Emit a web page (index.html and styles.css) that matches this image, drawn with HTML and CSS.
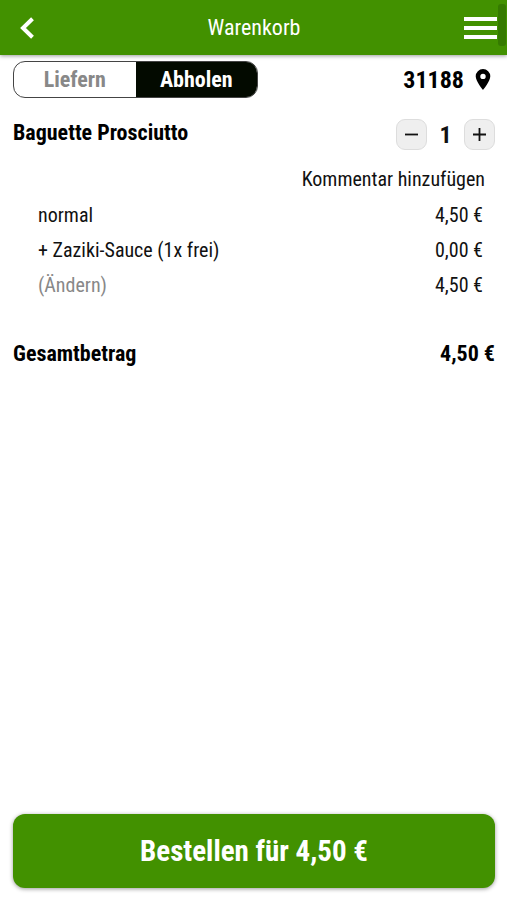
FILE: index.html
```html
<!DOCTYPE html>
<html lang="de">
<head>
<meta charset="utf-8">
<meta name="viewport" content="width=device-width, initial-scale=1">
<title>Warenkorb</title>
<link rel="stylesheet" href="styles.css">
</head>
<body>
<header class="topbar">
  <button class="icon-button" type="button" aria-label="Zurück">
    <svg width="18" height="24" viewBox="0 0 18 24"><path d="M13.500 2.800 4 12l9.500 9.200" fill="none" stroke="currentColor" stroke-width="4"/></svg>
  </button>
  <h1 class="topbar-title">Warenkorb</h1>
  <button class="icon-button" type="button" aria-label="Menü">
    <svg width="34" height="24" viewBox="0 0 34 24"><path d="M1 3h33M1 12h33M1 21h33" stroke="currentColor" stroke-width="4"/></svg>
  </button>
  <span class="scroll-thumb"></span>
</header>
<main class="cart">
  <div class="row delivery">
    <div class="modes">
      <button class="mode" type="button">Liefern</button>
      <button class="mode mode-active" type="button">Abholen</button>
    </div>
    <a class="place" href="#">31188
      <svg width="16" height="21" viewBox="0 0 16 21" aria-hidden="true"><path fill="currentColor" fill-rule="evenodd" d="M8 0a7.300 7.300 0 0 0-7.300 7.300C.7 12.500 8 21 8 21s7.300-8.500 7.300-13.700A7.300 7.300 0 0 0 8 0Zm0 4.700a2.700 2.700 0 1 1 0 5.400 2.700 2.700 0 0 1 0-5.400Z"/></svg>
    </a>
  </div>
  <div class="row product">
    <h2 class="heading">Baguette Prosciutto</h2>
    <div class="stepper">
      <button class="step" type="button" aria-label="Weniger"><svg width="13" height="13" viewBox="0 0 13 13"><path d="M0 6.500h13" stroke="currentColor" stroke-width="1.800"/></svg></button>
      <span class="count">1</span>
      <button class="step" type="button" aria-label="Mehr"><svg width="13" height="13" viewBox="0 0 13 13"><path d="M0 6.500h13M6.500 0v13" stroke="currentColor" stroke-width="1.800"/></svg></button>
    </div>
  </div>
  <a class="comment" href="#">Kommentar hinzufügen</a>
  <div class="row item"><span>normal</span><span>4,50 €</span></div>
  <div class="row item"><span>+ Zaziki-Sauce (1x frei)</span><span>0,00 €</span></div>
  <div class="row item"><a class="change" href="#">(Ändern)</a><span>4,50 €</span></div>
  <div class="row heading total"><span>Gesamtbetrag</span><span>4,50 €</span></div>
</main>
<footer class="checkout">
  <button class="order" type="button">Bestellen für 4,50 €</button>
</footer>
</body>
</html>
```
FILE: styles.css
```css
* { box-sizing: border-box; }
body {
  margin: 0;
  min-height: 100vh;
  display: flex;
  flex-direction: column;
  background: #fff;
  color: #111;
  font: 20px/24px "Roboto Condensed", Roboto, sans-serif;
}
button { font: inherit; color: inherit; margin: 0; padding: 0; border: 0; background: none; }
a { color: inherit; text-decoration: none; }
h1, h2 { margin: 0; }
svg { display: block; }
.topbar {
  position: relative;
  display: grid;
  grid-template-columns: 34px 1fr 34px;
  align-items: center;
  height: 55px;
  padding: 1px 10px 0 11px;
  background: #429100;
  color: #fff;
  box-shadow: 0 1px 4px rgba(0, 0, 0, .4);
}
.icon-button { display: flex; justify-content: center; }
.topbar-title { font-size: 22px; font-weight: 400; text-align: center; }
.scroll-thumb {
  position: absolute;
  top: 4px;
  right: 1px;
  width: 8px;
  height: 42px;
  border-radius: 3px;
  background: #357a00;
}
.cart { padding: 6px 12px 0 13px; }
.row { display: flex; justify-content: space-between; align-items: center; }
.modes {
  display: grid;
  grid-template-columns: 1fr 1fr;
  width: 245px;
  height: 37px;
  overflow: hidden;
  border: 1px solid #444;
  border-radius: 12px;
}
.mode { color: #888; font-size: 22px; font-weight: 700; }
.mode-active { background: #030a00; color: #fff; }
.place { display: flex; align-items: center; gap: 11px; padding-right: 4px; color: #000; font-size: 24px; font-weight: 700; }
.product { height: 60px; margin-top: 6px; align-items: flex-start; }
.product .heading { padding-top: 17px; }
.heading { color: #000; font-size: 22px; line-height: 24px; font-weight: 700; }
.stepper { display: flex; align-items: center; padding-top: 15px; }
.step {
  display: flex;
  align-items: center;
  justify-content: center;
  width: 31px;
  height: 31px;
  border: 1px solid #ddd;
  border-radius: 9px;
  background: #efefef;
}
.count { width: 37px; text-align: center; font-size: 24px; font-weight: 700; }
.comment { display: block; padding: 0 10px 3px; text-align: right; line-height: 30px; }
.item { height: 35px; padding: 0 12px 0 25px; }
.change { color: #888; }
.total { margin-top: 40px; }
.checkout { margin-top: auto; padding: 0 12px 12px 13px; }
.order {
  display: block;
  width: 100%;
  height: 74px;
  border-radius: 12px;
  background: #429100;
  color: #fff;
  font-size: 29px;
  font-weight: 700;
  box-shadow: 0 1px 4px rgba(0, 0, 0, .4);
}
```
